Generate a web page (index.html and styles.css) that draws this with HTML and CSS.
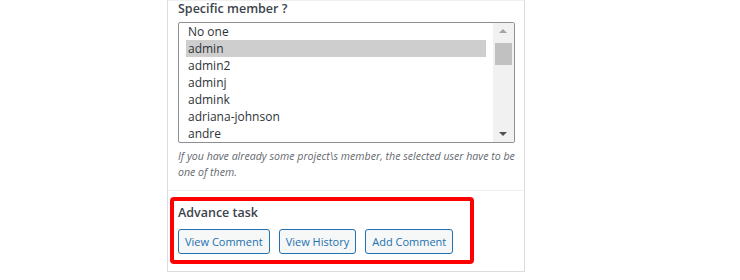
FILE: index.html
```html
<!DOCTYPE html>
<html>
<head>
<meta charset="utf-8">
<link rel="stylesheet" href="styles.css">
</head>
<body>
<div class="panel">
  <div class="field">
    <div class="label">Specific member ?</div>
    <div class="listbox">
      <ul class="options">
        <li>No one</li>
        <li class="selected">admin</li>
        <li>admin2</li>
        <li>adminj</li>
        <li>admink</li>
        <li>adriana-johnson</li>
        <li>andre</li>
      </ul>
      <div class="scrollbar">
        <div class="arrow up"></div>
        <div class="track"><div class="thumb"></div></div>
        <div class="arrow down"></div>
      </div>
    </div>
    <p class="desc">If you have already some project\s member, the selected user have to be one of them.</p>
  </div>
  <div class="advance">
    <div class="label">Advance task</div>
    <div class="buttons">
      <button class="btn">View Comment</button>
      <button class="btn">View History</button>
      <button class="btn">Add Comment</button>
    </div>
  </div>
</div>
</body>
</html>
```
FILE: styles.css
```css
html, body {
  margin: 0;
  padding: 0;
  background: #fff;
}
body {
  font-family: "Open Sans", "Noto Sans", sans-serif;
  color: #3c434a;
}
.panel {
  margin-left: 167px;
  width: 356px;
  border: 1px solid #dcdcde;
  border-top: 1px solid #f0f0f1;
  background: #fff;
}
.field {
  padding: 0 9px 0 10px;
  border-bottom: 1px solid #f0f0f1;
}
.label {
  font-size: 12.5px;
  font-weight: 600;
  line-height: 17px;
  color: #3c434a;
  margin-top: 0;
}
.field .label {
  margin-top: -1px;
}
.listbox {
  margin-top: 5px;
  height: 119px;
  border: 1px solid #8c8f94;
  border-radius: 2px;
  display: flex;
  overflow: hidden;
}
.options {
  list-style: none;
  margin: 0;
  padding: 0 7px;
  flex: 1;
}
.options li {
  height: 17px;
  line-height: 17px;
  font-size: 12px;
  padding: 0 2px;
  color: #2c3338;
}
.options li.selected {
  background: #cecece;
}
.scrollbar {
  width: 21px;
  background: #f1f1f1;
  display: flex;
  flex-direction: column;
  align-items: center;
}
.arrow {
  height: 17px;
  width: 17px;
  position: relative;
}
.arrow::after {
  content: "";
  position: absolute;
  left: 4px;
  border-left: 4px solid transparent;
  border-right: 4px solid transparent;
}
.arrow.up::after {
  top: 6px;
  border-bottom: 4px solid #a3a3a3;
}
.arrow.down::after {
  top: 7px;
  border-top: 4px solid #505050;
}
.track {
  flex: 1;
  width: 17px;
  padding-top: 3px;
}
.thumb {
  height: 22px;
  background: #c1c1c1;
}
.desc {
  margin: 5px 0 10px;
  font-size: 10.6px;
  font-style: italic;
  line-height: 16px;
  color: #646970;
}
.advance {
  margin: 6px 50px 7px 2px;
  border: 4px solid #f00;
  border-radius: 4px;
  padding: 2px 4px 6px;
}
.advance .label {
  line-height: 20px;
}
.buttons {
  display: flex;
  gap: 9px;
  margin-top: 6px;
}
.btn {
  flex: none;
  white-space: nowrap;
  font-family: "Open Sans", "Noto Sans", sans-serif;
  font-size: 11px;
  color: #2271b1;
  border: 1px solid #2271b1;
  background: #f6f7f7;
  border-radius: 3px;
  height: 25px;
  padding: 0 6px;
  cursor: pointer;
}
```
